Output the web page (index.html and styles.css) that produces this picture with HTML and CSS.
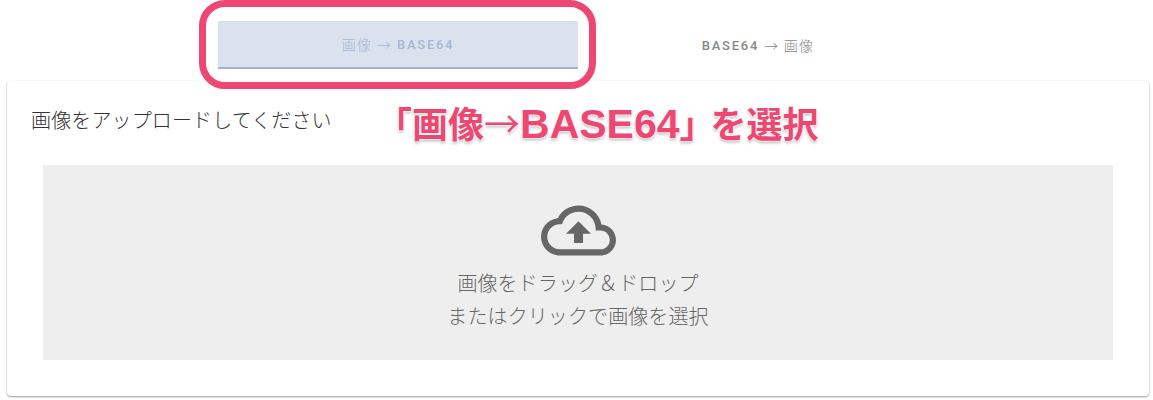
FILE: index.html
```html
<!DOCTYPE html>
<html lang="ja">

<head>
    <meta charset="UTF-8" />
    <meta name="viewport" content="width=device-width, initial-scale=1.0" />
    <title>画像 BASE64 変換</title>
    <link rel="stylesheet" href="styles.css">
</head>

<body>

    <nav class="tabs">
        <div class="tabs__item tabs__item--active"><span class="tabs__thin">画像 →</span>&nbsp;BASE64</div>
        <div class="tabs__item">BASE64&nbsp;<span class="tabs__thin">→ 画像</span></div>
    </nav>

    <section class="card">
        <h2 class="card__title">画像をアップロードしてください</h2>
        <div class="drop">
            <svg class="drop__icon" viewBox="0 0 24 24" aria-hidden="true">
                <path d="M19.35 10.04C18.67 6.59 15.64 4 12 4 9.11 4 6.6 5.64 5.35 8.04 2.34 8.36 0 10.91 0 14c0 3.31 2.69 6 6 6h13c2.76 0 5-2.24 5-5 0-2.64-2.05-4.78-4.65-4.96zM19 18H6c-2.21 0-4-1.79-4-4s1.79-4 4-4h.71C7.37 7.69 9.48 6 12 6c3.04 0 5.5 2.46 5.5 5.5v.5H19c1.66 0 3 1.34 3 3s-1.34 3-3 3z" />
                <path d="M8 13h2.55v3h2.9v-3H16l-4-4z" />
            </svg>
            <p class="drop__text">画像をドラッグ＆ドロップ<br>またはクリックで画像を選択</p>
        </div>
    </section>

    <!-- annotation drawn over the screenshot -->
    <div class="note__box"></div>
    <div class="note__label">「画像<span class="note__arrow">→</span><span class="note__latin">BASE64</span><span class="note__close">」</span>を選択</div>

</body>

</html>
```

FILE: styles.css
```css
* {
    box-sizing: border-box;
}

body {
    margin: 0;
    height: 400px;
    overflow: hidden;
    position: relative;
    background: #fff;
    font-family: Roboto, "Noto Sans CJK JP", sans-serif;
}

.tabs {
    display: flex;
    justify-content: center;
    padding: 21px 0 12px 3px;
}

.tabs__item {
    width: 360px;
    height: 48px;
    display: flex;
    align-items: center;
    justify-content: center;
    font-size: 13px;
    font-weight: 500;
    letter-spacing: 1.75px;
    color: #888;
}

.tabs__thin {
    font-size: 14px;
    font-weight: 300;
    letter-spacing: 1.2px;
}

.tabs__item--active {
    background: #dbe2ed;
    border-bottom: 2px solid #9db6d6;
    color: #a1b8d6;
}

.card {
    margin: 0 4px 0 7px;
    height: 315px;
    padding: 24px 36px 36px;
    background: #fff;
    border-radius: 4px;
    box-shadow: 0 1px 2px rgba(0, 0, 0, 0.4), 0 0 1px rgba(0, 0, 0, 0.08);
}

.card__title {
    margin: 0 0 0 -12px;
    padding-top: 1px;
    height: 30px;
    font-size: 20px;
    line-height: 30px;
    font-weight: 300;
    letter-spacing: 0.13px;
    color: #333;
}

.drop {
    margin-top: 30px;
    height: 195px;
    padding-top: 28px;
    background: #eee;
    text-align: center;
    color: #666;
}

.drop__icon {
    display: block;
    width: 75px;
    height: 75px;
    margin: 0 auto;
    fill: #666;
}

.drop__text {
    margin: 0;
    font-size: 20px;
    line-height: 33px;
    font-weight: 300;
    letter-spacing: 0.1px;
}

.note__box {
    position: absolute;
    left: 199px;
    top: 0;
    width: 397px;
    height: 89px;
    border: 7px solid #ee4771;
    border-radius: 26px;
}

.note__label {
    position: absolute;
    left: 376px;
    top: 98px;
    font-family: "Noto Sans CJK JP", sans-serif;
    font-size: 36px;
    line-height: 48px;
    font-weight: 700;
    white-space: nowrap;
    color: #ee4771;
    text-shadow: 0 0 2px #fff, 0 0 3px #fff, 0 0 3px #fff, 0 2px 3px rgba(0, 0, 0, 0.35);
}

.note__arrow {
    font-weight: 400;
}

.note__latin {
    font-family: "Liberation Sans", sans-serif;
    font-size: 41px;
}

.note__close {
    letter-spacing: -5px;
}
```
